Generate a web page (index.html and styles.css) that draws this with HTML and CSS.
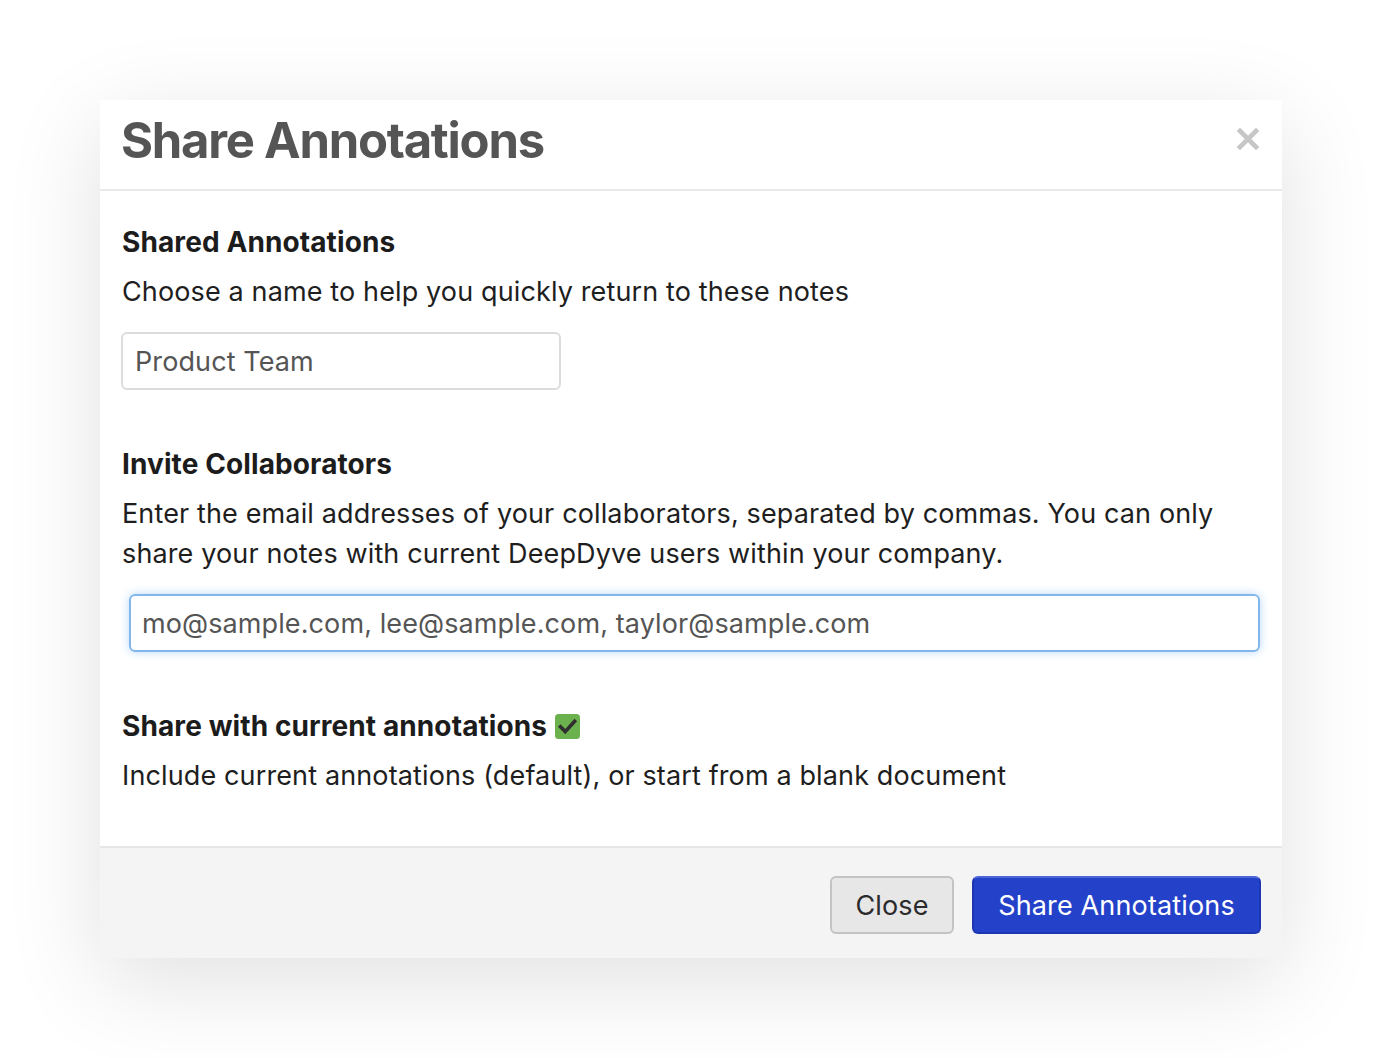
FILE: index.html
```html
<!DOCTYPE html>
<html lang="en">
<head>
<meta charset="utf-8">
<title>Share Annotations</title>
<link rel="stylesheet" href="styles.css">
</head>
<body>
<div class="page">
  <div class="modal">
    <div class="modal-header">
      <h1 class="modal-title">Share Annotations</h1>
      <button class="close-x" aria-label="Close">
        <svg width="22" height="22" viewBox="0 0 22 22"><path d="M3 3 L19 19 M19 3 L3 19" stroke="#c6c6c6" stroke-width="4.6" stroke-linecap="square"/></svg>
      </button>
    </div>
    <div class="modal-body">
      <section class="group">
        <h2 class="label">Shared Annotations</h2>
        <p class="help">Choose a name to help you quickly return to these notes</p>
        <div class="input input-name">Product Team</div>
      </section>
      <section class="group">
        <h2 class="label">Invite Collaborators</h2>
        <p class="help">Enter the email addresses of your collaborators, separated by commas. You can only share your notes with current DeepDyve users within your company.</p>
        <div class="input input-emails">mo@sample.com, lee@sample.com, taylor@sample.com</div>
      </section>
      <section class="group">
        <h2 class="label">Share with current annotations
          <svg class="check" width="25" height="25" viewBox="0 0 25 25"><rect x="0" y="0" width="25" height="25" rx="3.5" fill="#6bb24e"/><path d="M5.5 12.8 L10.2 17.6 L19.6 7.4" fill="none" stroke="#2f2f2f" stroke-width="3.6" stroke-linecap="square"/></svg>
        </h2>
        <p class="help">Include current annotations (default), or start from a blank document</p>
      </section>
    </div>
    <div class="modal-footer">
      <button class="btn btn-default">Close</button>
      <button class="btn btn-primary">Share Annotations</button>
    </div>
  </div>
</div>
</body>
</html>
```
FILE: styles.css
```css
* { box-sizing: border-box; }
html, body { margin: 0; padding: 0; background: #ffffff; }
body {
  font-family: Inter, "Noto Sans", "Liberation Sans", sans-serif;
  color: #1c1c1c;
}
.page {
  padding: 100px 100px 100px 100px;
}
.modal {
  width: 1182px;
  background: #ffffff;
  box-shadow: 0 24px 90px rgba(0, 0, 0, 0.12);
}
.modal-header {
  height: 91px;
  border-bottom: 2px solid #e9e9e9;
  display: flex;
  align-items: center;
  justify-content: space-between;
  padding: 0 23px 0 21px;
}
.modal-title {
  margin: 0;
  font-size: 49px;
  font-weight: 700;
  color: #555555;
  letter-spacing: -1.25px;
  line-height: 60px;
  position: relative;
  top: -4px;
}
.close-x {
  border: 0;
  background: transparent;
  padding: 0;
  width: 22px;
  height: 22px;
  display: block;
  position: relative;
  top: -6px;
}
.close-x svg { display: block; }
.modal-body {
  padding: 31px 22px 50px 22px;
  display: flex;
  flex-direction: column;
  gap: 54px;
}
.group {
  display: flex;
  flex-direction: column;
}
.label {
  margin: 0;
  font-size: 28px;
  font-weight: 700;
  line-height: 40px;
  color: #1c1c1c;
  display: flex;
  align-items: center;
  gap: 8px;
  letter-spacing: 0.1px;
}
.check { display: block; }
.help {
  margin: 10px 0 0 0;
  font-size: 27px;
  line-height: 40px;
  color: #1e1e1e;
  letter-spacing: 0.13px;
}
.input {
  margin-top: 20px;
  height: 58px;
  border: 2px solid #dcdcdc;
  border-radius: 6px;
  font-size: 27px;
  color: #555555;
  display: flex;
  align-items: center;
  padding-left: 12px;
  letter-spacing: 0.1px;
}
.input-name { width: 440px; margin-left: -1px; }
.input-emails {
  margin-left: 7px;
  width: 1131px;
  padding-left: 11px;
  border-color: #82b6ec;
  box-shadow: 0 0 10px rgba(102, 170, 240, 0.45);
}
.modal-footer {
  border-top: 2px solid #e6e6e6;
  background: #f4f4f4;
  height: 112px;
  display: flex;
  justify-content: flex-end;
  align-items: flex-start;
  gap: 18px;
  padding: 28px 21px 0 0;
}
.btn {
  height: 58px;
  border-radius: 6px;
  font-family: Inter, "Noto Sans", "Liberation Sans", sans-serif;
  font-size: 27px;
  padding: 0;
  display: flex;
  align-items: center;
  justify-content: center;
  letter-spacing: 0.15px;
}
.btn-default {
  width: 124px;
  background: #e7e7e7;
  border: 2px solid #c3c3c3;
  color: #2b2b2b;
}
.btn-primary {
  width: 289px;
  background: #2442c9;
  border: 2px solid #1d37b3;
  border-top-color: #4c66d8;
  color: #ffffff;
}
```
